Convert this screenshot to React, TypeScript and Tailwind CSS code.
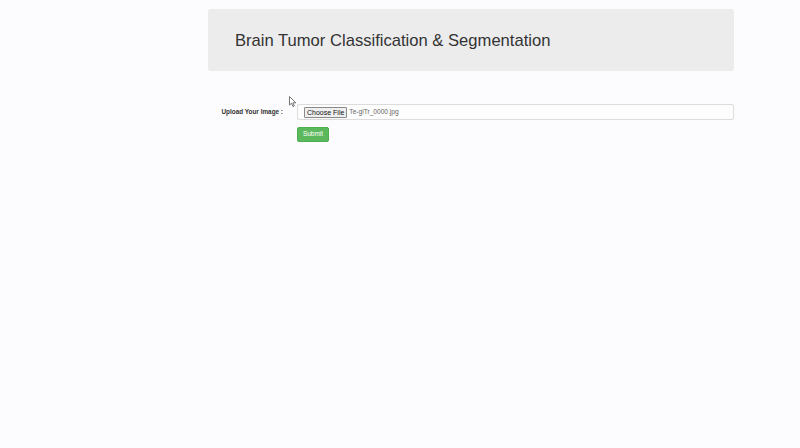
import React from 'react';

export default function App() {
  return (
    <div
      className="relative min-h-[448px] w-[800px] bg-[#fcfcfe] text-[#333]"
      style={{ fontFamily: '"Liberation Sans", Arial, sans-serif' }}
    >
      <div className="ml-[208px] w-[526px] pt-[9px]">
        {/* Jumbotron */}
        <div className="flex h-[62px] items-center rounded-[3px] bg-[#ececed] px-[27px] pt-[2px]">
          <h1 className="text-[16.6px] font-normal leading-none text-[#333]">
            Brain Tumor Classification &amp; Segmentation
          </h1>
        </div>

        {/* Upload form */}
        <form className="mt-[33px]" onSubmit={(e) => e.preventDefault()}>
          <div className="flex items-center">
            <label className="w-[89px] pr-[14px] text-right text-[6.4px] font-bold text-[#333]">
              Upload Your Image :
            </label>
            <div className="flex h-[16px] flex-1 items-center rounded-[2px] border border-[#dcdcdc] bg-[#fdfdfd] pl-[6px]">
              <span className="flex h-[11px] items-center rounded-[1px] border border-[#8a8a8a] bg-[#efefef] px-[2px] text-[7px] leading-none text-[#111]">
                Choose File
              </span>
              <span className="ml-[2px] text-[6.6px] leading-none text-[#666]">Te-glTr_0000.jpg</span>
            </div>
          </div>
          <div className="ml-[89px] mt-[7px]">
            <button
              type="submit"
              className="flex h-[15px] w-[32px] items-center justify-center rounded-[2px] border border-[#4cae4c] bg-[#5cb85c] text-[6.5px] leading-none text-white"
            >
              Submit
            </button>
          </div>
        </form>
      </div>

      {/* mouse cursor */}
      <svg className="absolute left-[289px] top-[96px]" width="8" height="12" viewBox="0 0 8 12">
        <path d="M0.5 0.5 L0.5 9 L2.6 7.2 L4 10.6 L5.3 10 L3.9 6.8 L6.8 6.8 Z" fill="#fff" stroke="#555" strokeWidth="0.8" />
      </svg>
    </div>
  );
}
